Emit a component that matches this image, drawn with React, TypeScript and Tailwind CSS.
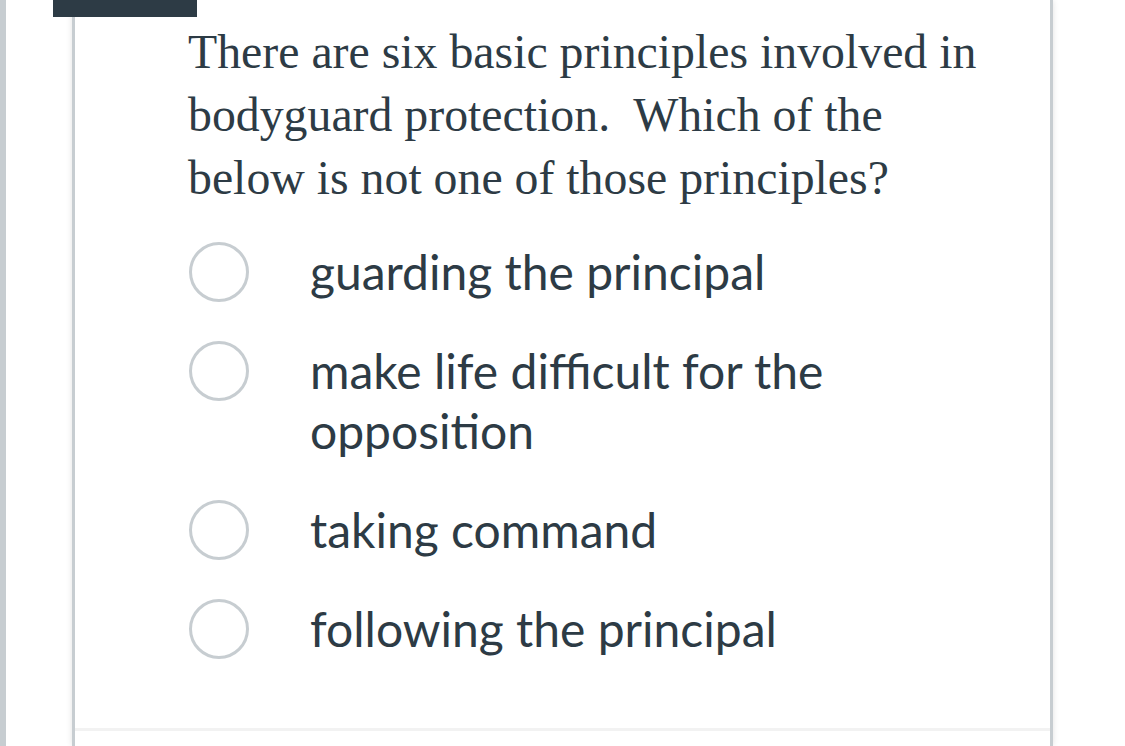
import React from "react";

const options = [
  "guarding the principal",
  "make life difficult for the opposition",
  "taking command",
  "following the principal",
];

export default function App() {
  return (
    <div className="relative flex h-[746px] w-[1125px] overflow-hidden bg-white">
      <div className="w-[6px] shrink-0 bg-[#c7cdd1]" />
      <div className="ml-[66px] flex w-[981px] shrink-0 flex-col border-x-[3px] border-[#c7cdd1] bg-white shadow-[0_0_6px_rgba(0,0,0,0.12)]">
        <div className="flex-1 pl-[113px] pt-[20px]">
          <p
            className="w-[820px] text-[47.8px] leading-[63px] text-[#2d3b45]"
            style={{ fontFamily: '"Liberation Serif", "Times New Roman", serif' }}
          >
            There are six basic principles involved in bodyguard protection.{"\u00a0 "}Which of the below is not one of those principles?
          </p>
          <div
            className="mt-[33px] flex flex-col gap-[39px]"
            style={{ fontFamily: 'Lato, "Noto Sans", sans-serif' }}
          >
            {options.map((o) => (
              <div key={o} className="flex items-start">
                <div className="ml-[1px] h-[60px] w-[60px] shrink-0 rounded-full border-[3px] border-[#c7cdd1]" />
                <div className="ml-[61px] w-[600px] text-[48px] leading-[60px] text-[#2d3b45]">{o}</div>
              </div>
            ))}
          </div>
        </div>
        <div className="mb-[15px] h-[3px] bg-[#f2f2f2]" />
      </div>
      <div className="absolute left-[53px] top-0 h-[17px] w-[144px] bg-[#2d3b45]" />
    </div>
  );
}
